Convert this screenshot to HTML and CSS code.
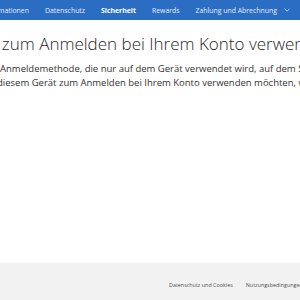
FILE: index.html
```html
<!DOCTYPE html>
<html>
<head>
  <meta charset="UTF-8">
  <title>Sicherheit</title>
  <link rel="stylesheet" href="styles.css">
</head>
<body>
  <div class="nav">
    <span class="nav-item cut">Ihre Informationen</span>
    <span class="nav-item">Datenschutz</span>
    <span class="nav-item active">Sicherheit</span>
    <span class="nav-item">Rewards</span>
    <span class="nav-item">Zahlung und Abrechnung
      <svg class="chevron" width="6" height="4" viewBox="0 0 6 4"><path d="M0.5 0.8 L3 3.2 L5.5 0.8" fill="none" stroke="#d6e4f7" stroke-width="0.8"/></svg>
    </span>
  </div>

  <div class="content">
    <h1 class="title">App zum Anmelden bei Ihrem Konto verwenden</h1>
    <p class="text line-one">Anmeldemethode, die nur auf dem Gerät verwendet wird, auf dem Sie sie eingerichtet haben.</p>
    <p class="text line-two">diesem Gerät zum Anmelden bei Ihrem Konto verwenden möchten, wählen Sie „Weiter“.</p>
  </div>

  <div class="footer">
    <span class="footer-link">Datenschutz und Cookies</span>
    <span class="footer-link">Nutzungsbedingungen</span>
  </div>
</body>
</html>
```

FILE: styles.css
```css
body {
  margin: 0;
  width: 300px;
  height: 300px;
  overflow: hidden;
  display: flex;
  flex-direction: column;
  font-family: "Open Sans", "Noto Sans", sans-serif;
  background: white;
  color: #262626;
}

.nav {
  height: 20px;
  background: #2b6dc3;
  display: flex;
  align-items: center;
  gap: 16px;
  white-space: nowrap;
  overflow: hidden;
  flex-shrink: 0;
}

.nav-item {
  font-size: 6.9px;
  color: #e3ecf8;
  display: flex;
  align-items: center;
  gap: 7px;
}

.nav-item.cut {
  margin-left: -32px;
}

.nav-item.active {
  font-weight: 700;
  color: white;
}

.content {
  flex: 1;
  overflow: hidden;
  white-space: nowrap;
}

.title {
  margin: 13px 0 0 -33px;
  font-size: 17px;
  line-height: 21px;
  font-weight: 300;
  color: #262626;
}

.text {
  margin: 0;
  font-size: 9.5px;
  line-height: 14px;
  color: #333;
}

.line-one {
  margin-top: 8px;
}

.line-two {
  margin-left: -3px;
}

.footer {
  height: 37px;
  background: #f2f2f2;
  display: flex;
  align-items: center;
  padding-left: 169px;
  gap: 13px;
  white-space: nowrap;
  overflow: hidden;
  flex-shrink: 0;
}

.footer-link {
  font-size: 5.4px;
  color: #505050;
  margin-top: 6px;
}
```
